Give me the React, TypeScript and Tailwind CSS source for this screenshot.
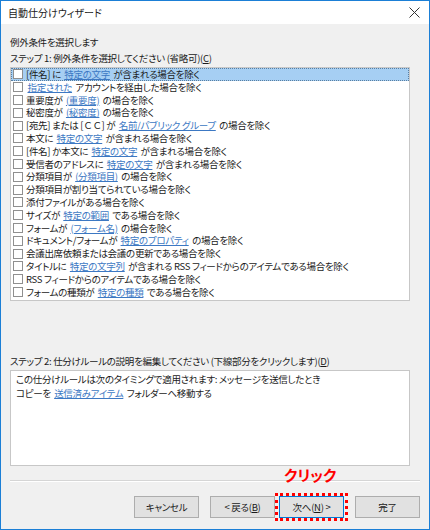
import { Fragment } from 'react'

type Seg = { t: string; link?: boolean; wide?: boolean }

const rows: Seg[][] = [
  [{ t: '[件名] に ' }, { t: '特定の文字', link: true }, { t: ' が含まれる場合を除く' }],
  [{ t: '指定された', link: true }, { t: ' アカウントを経由した場合を除く' }],
  [{ t: '重要度が ' }, { t: '(重要度)', link: true }, { t: ' の場合を除く' }],
  [{ t: '秘密度が ' }, { t: '(秘密度)', link: true }, { t: ' の場合を除く' }],
  [{ t: '[宛先] または ' }, { t: '[ＣＣ]', wide: true }, { t: ' が ' }, { t: '名前/パブリック グループ', link: true }, { t: ' の場合を除く' }],
  [{ t: '本文に ' }, { t: '特定の文字', link: true }, { t: ' が含まれる場合を除く' }],
  [{ t: '[件名] か本文に ' }, { t: '特定の文字', link: true }, { t: ' が含まれる場合を除く' }],
  [{ t: '受信者のアドレスに ' }, { t: '特定の文字', link: true }, { t: ' が含まれる場合を除く' }],
  [{ t: '分類項目が ' }, { t: '(分類項目)', link: true }, { t: ' の場合を除く' }],
  [{ t: '分類項目が割り当てられている場合を除く' }],
  [{ t: '添付ファイルがある場合を除く' }],
  [{ t: 'サイズが ' }, { t: '特定の範囲', link: true }, { t: ' である場合を除く' }],
  [{ t: 'フォームが ' }, { t: '(フォーム名)', link: true }, { t: ' の場合を除く' }],
  [{ t: 'ドキュメント/フォームが ' }, { t: '特定のプロパティ', link: true }, { t: ' の場合を除く' }],
  [{ t: '会議出席依頼または会議の更新である場合を除く' }],
  [{ t: 'タイトルに ' }, { t: '特定の文字列', link: true }, { t: ' が含まれる RSS フィードからのアイテムである場合を除く' }],
  [{ t: 'RSS フィードからのアイテムである場合を除く' }],
  [{ t: 'フォームの種類が ' }, { t: '特定の種類', link: true }, { t: ' である場合を除く' }],
]

function Segs({ segs }: { segs: Seg[] }) {
  return (
    <>
      {segs.map((s, i) => (
        <Fragment key={i}>
          {s.link ? (
            <span className="mx-[1.5px] text-[#3c78c3] underline underline-offset-[1px] decoration-[#3c78c3]">{s.t}</span>
          ) : s.wide ? (
            <span className="[font-feature-settings:normal]">{s.t}</span>
          ) : (
            s.t
          )}
        </Fragment>
      ))}
    </>
  )
}

function Btn({ children, focus }: { children: React.ReactNode; focus?: boolean }) {
  return (
    <div
      className={`w-[65px] h-[22px] flex items-center justify-center bg-[#e1e1e1] border ${
        focus ? 'border-[#0078d7]' : 'border-[#adadad]'
      }`}
    >
      {children}
    </div>
  )
}

export default function App() {
  return (
    <div className="w-[430px] h-[530px] flex flex-col bg-[#f0f0f0] border border-[#1b7fd6] text-[9.5px] tracking-[-0.3px] text-[#1a1a1a] font-['Noto_Sans_CJK_JP','Noto_Sans',sans-serif] [font-feature-settings:'palt'_1] overflow-hidden">
      {/* title bar */}
      <div className="h-[23px] bg-white flex items-center justify-between pl-[7px] pr-[9px] shrink-0">
        <span className="text-[10px] tracking-normal">自動仕分けウィザード</span>
        <svg width="11" height="11" viewBox="0 0 11 11">
          <path d="M0.5 0.5 L10.5 10.5 M10.5 0.5 L0.5 10.5" stroke="#333" strokeWidth="1" />
        </svg>
      </div>

      <div className="flex flex-col px-[9px] pt-[10px]">
        <div className="leading-[16px] h-[16px]">例外条件を選択します</div>
        <div className="leading-[16px] h-[16px]">
          ステップ 1: 例外条件を選択してください (省略可)(<span className="underline">C</span>)
        </div>

        {/* condition list */}
        <div className="w-[400px] h-[234px] mt-[1px] bg-white border border-[#c7c7c7]">
          {rows.map((r, i) => (
            <div
              key={i}
              className={`h-[12.8px] leading-[12.8px] flex items-center gap-[3px] pl-[2px] whitespace-nowrap ${
                i === 0 ? 'bg-[#a6cff3] outline outline-1 outline-dotted outline-[#5a7ea0] -outline-offset-1' : ''
              }`}
            >
              <span className="w-[10px] h-[10px] border border-[#8f8f8f] bg-white shrink-0" />
              <span>
                <Segs segs={r} />
              </span>
            </div>
          ))}
        </div>

        <div className="mt-[52px] leading-[16px] h-[16px]">
          ステップ 2: 仕分けルールの説明を編集してください (下線部分をクリックします)(<span className="underline">D</span>)
        </div>

        {/* description box */}
        <div className="w-[400px] h-[96px] mt-[1px] bg-white border border-[#c7c7c7] px-[5px] pt-[1px] leading-[14px]">
          <div>この仕分けルールは次のタイミングで適用されます: メッセージを送信したとき</div>
          <div>
            <Segs segs={[{ t: 'コピーを ' }, { t: '送信済みアイテム', link: true }, { t: ' フォルダーへ移動する' }]} />
          </div>
        </div>

        <div className="w-[410px] mt-[14px] border-t border-[#d5d5d5] border-b border-b-white" />

        {/* buttons */}
        <div className="flex justify-end mt-[14px] w-[410px]">
          <div className="flex items-center">
            <Btn>キャンセル</Btn>
            <div className="w-[11px]" />
            <Btn>
              &lt; 戻る(<span className="underline">B</span>)
            </Btn>
            <div className="w-[4px]" />
            <div className="relative">
              <Btn focus>
                次へ(<span className="underline">N</span>) &gt;
              </Btn>
              <div className="absolute -left-[4px] -top-[3px] w-[73px] h-[28px] border-[3px] border-dotted border-[#ff0000]" />
              <div className="absolute left-[5px] -top-[30px] text-[15px] font-bold tracking-normal text-[#ff0000] whitespace-nowrap leading-[18px]">
                クリック
              </div>
            </div>
            <div className="w-[11px]" />
            <Btn>完了</Btn>
          </div>
        </div>
      </div>
    </div>
  )
}
